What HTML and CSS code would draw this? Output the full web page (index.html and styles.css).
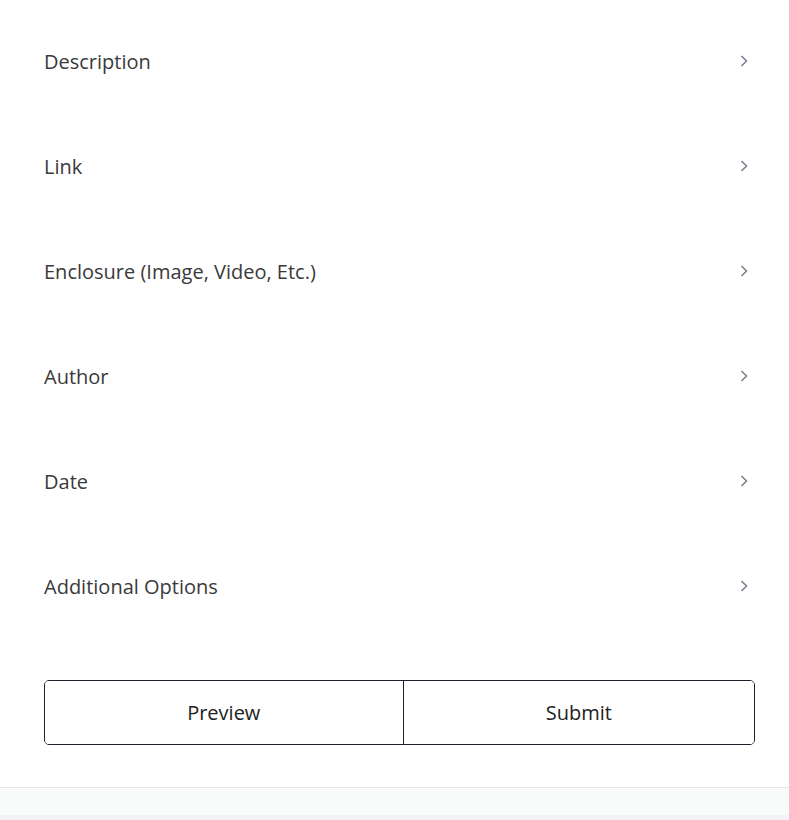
FILE: index.html
```html
<!DOCTYPE html>
<html lang="en">
<head>
    <meta charset="UTF-8">
    <meta name="viewport" content="width=device-width, initial-scale=1.0">
    <title>Feed Item</title>
    <link rel="stylesheet" href="styles.css">
</head>
<body>
    <div class="panel">
        <div class="sections">
            <div class="section-row"><span>Description</span><svg class="chevron" viewBox="0 0 8 12"><path d="M1.5 1l5 5-5 5"/></svg></div>
            <div class="section-row"><span>Link</span><svg class="chevron" viewBox="0 0 8 12"><path d="M1.5 1l5 5-5 5"/></svg></div>
            <div class="section-row"><span>Enclosure (Image, Video, Etc.)</span><svg class="chevron" viewBox="0 0 8 12"><path d="M1.5 1l5 5-5 5"/></svg></div>
            <div class="section-row"><span>Author</span><svg class="chevron" viewBox="0 0 8 12"><path d="M1.5 1l5 5-5 5"/></svg></div>
            <div class="section-row"><span>Date</span><svg class="chevron" viewBox="0 0 8 12"><path d="M1.5 1l5 5-5 5"/></svg></div>
            <div class="section-row"><span>Additional Options</span><svg class="chevron" viewBox="0 0 8 12"><path d="M1.5 1l5 5-5 5"/></svg></div>
        </div>
        <div class="actions">
            <button class="btn">Preview</button>
            <button class="btn">Submit</button>
        </div>
    </div>
    <div class="footer-bar"></div>
    <div class="footer-edge"></div>
</body>
</html>
```

FILE: styles.css
```css
body {
    font-family: 'Open Sans', 'Noto Sans', sans-serif;
    background-color: #fff;
    color: #333;
    margin: 0;
    padding: 0;
}

.panel {
    padding: 9px 34px 42px 44px;
}

.section-row {
    display: flex;
    align-items: center;
    justify-content: space-between;
    height: 105px;
    font-size: 20px;
    color: #3a3a3a;
}

.section-row span {
    margin-top: -1px;
}

.chevron {
    width: 8px;
    height: 12px;
    margin-right: 7px;
    margin-top: -2px;
    fill: none;
    stroke: #7b8290;
    stroke-width: 1.6;
}

.actions {
    display: flex;
    margin-top: 41px;
    border: 1px solid #1f1f2e;
    border-radius: 5px;
    overflow: hidden;
}

.btn {
    flex: auto;
    height: 63px;
    background-color: #fff;
    border: none;
    font-family: inherit;
    font-size: 20px;
    color: #222;
    cursor: pointer;
}

.btn + .btn {
    border-left: 1px solid #1f1f2e;
}

.footer-bar {
    height: 27px;
    background-color: #f9fafa;
    border-top: 1px solid #e4e7e7;
}

.footer-edge {
    height: 8px;
    background-color: #f2f2f8;
}
```
